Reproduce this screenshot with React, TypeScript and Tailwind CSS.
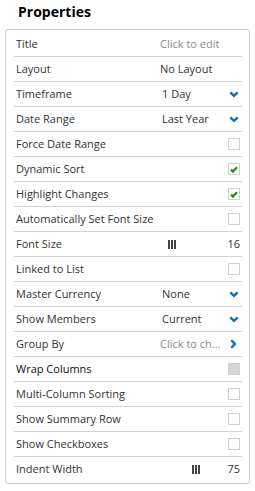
import React from "react";

type Kind = "text" | "select" | "check" | "slider" | "link";

type Row = {
  label: string;
  kind: Kind;
  value?: string;
  checked?: boolean;
  disabled?: boolean;
  muted?: boolean;
};

const rows: Row[] = [
  { label: "Title", kind: "text", value: "Click to edit", muted: true },
  { label: "Layout", kind: "text", value: "No Layout" },
  { label: "Timeframe", kind: "select", value: "1 Day" },
  { label: "Date Range", kind: "select", value: "Last Year" },
  { label: "Force Date Range", kind: "check" },
  { label: "Dynamic Sort", kind: "check", checked: true },
  { label: "Highlight Changes", kind: "check", checked: true },
  { label: "Automatically Set Font Size", kind: "check" },
  { label: "Font Size", kind: "slider", value: "16" },
  { label: "Linked to List", kind: "check" },
  { label: "Master Currency", kind: "select", value: "None" },
  { label: "Show Members", kind: "select", value: "Current" },
  { label: "Group By", kind: "link", value: "Click to ch..." },
  { label: "Wrap Columns", kind: "check", disabled: true },
  { label: "Multi-Column Sorting", kind: "check" },
  { label: "Show Summary Row", kind: "check" },
  { label: "Show Checkboxes", kind: "check" },
  { label: "Indent Width", kind: "slider", value: "75" },
];

function ChevronDown() {
  return (
    <svg width="10" height="7" viewBox="0 0 10 7" className="shrink-0">
      <polyline points="1.3,1.3 5,4.8 8.7,1.3" fill="none" stroke="#0f6cb6" strokeWidth="2.4" />
    </svg>
  );
}

function ChevronRight() {
  return (
    <svg width="7" height="10" viewBox="0 0 7 10" className="shrink-0">
      <polyline points="1.3,1.3 4.8,5 1.3,8.7" fill="none" stroke="#0f6cb6" strokeWidth="2.4" />
    </svg>
  );
}

function Checkbox({ checked, disabled }: { checked?: boolean; disabled?: boolean }) {
  return (
    <span
      className={`flex h-[12px] w-[12px] items-center justify-center border border-[#d0d0d0] ${
        disabled ? "bg-[#d6d6d6]" : "bg-white"
      }`}
    >
      {checked && (
        <svg width="8" height="7" viewBox="0 0 8 7">
          <polyline points="1,3.6 3,5.6 7,1.2" fill="none" stroke="#1f8a1f" strokeWidth="2.2" />
        </svg>
      )}
    </span>
  );
}

function SliderGrip() {
  return (
    <span className="flex h-[9px] items-end gap-[1px]">
      <span className="h-[9px] w-[2px] bg-[#444]" />
      <span className="h-[9px] w-[2px] bg-[#444]" />
      <span className="h-[9px] w-[2px] bg-[#444]" />
    </span>
  );
}

function PropertyRow({ row, last }: { row: Row; last: boolean }) {
  return (
    <div
      className={`flex h-[25px] items-center px-[2px] ${last ? "" : "border-b border-[#d4d4d4]"}`}
    >
      <span className={`w-[144px] shrink-0 truncate ${row.disabled ? "text-[#111]" : ""}`}>
        {row.label}
      </span>
      <div className="flex flex-1 items-center">
        {row.kind === "text" && (
          <span className={row.muted ? "text-[#8a8a8a]" : ""}>{row.value}</span>
        )}
        {row.kind === "select" && (
          <>
            <span className="flex-1 pl-[2px]">{row.value}</span>
            <span className="pr-[1px]">
              <ChevronDown />
            </span>
          </>
        )}
        {row.kind === "link" && (
          <>
            <span className="flex-1 text-[#8a8a8a]">{row.value}</span>
            <span className="pr-[3px]">
              <ChevronRight />
            </span>
          </>
        )}
        {row.kind === "check" && (
          <span className="ml-auto">
            <Checkbox checked={row.checked} disabled={row.disabled} />
          </span>
        )}
        {row.kind === "slider" && (
          <>
            <span className={row.label === "Font Size" ? "pl-[8px]" : "pl-[32px]"}>
              <SliderGrip />
            </span>
            <span className="ml-auto">{row.value}</span>
          </>
        )}
      </div>
    </div>
  );
}

export default function App() {
  return (
    <div
      className="h-[491px] w-[255px] bg-white text-[11px] text-[#333]"
      style={{ fontFamily: '"Open Sans", "Liberation Sans", sans-serif' }}
    >
      <h1 className="px-[18px] pt-[2px] text-[14px] leading-[20px] font-bold text-black">
        Properties
      </h1>
      <div className="mx-[5px] mt-[7px] w-[245px] rounded-[3px] border border-[#cfcfcf] pt-[2px] pr-[7px] pb-[1px] pl-[8px]">
        {rows.map((r, i) => (
          <PropertyRow key={r.label} row={r} last={i === rows.length - 1} />
        ))}
      </div>
    </div>
  );
}
